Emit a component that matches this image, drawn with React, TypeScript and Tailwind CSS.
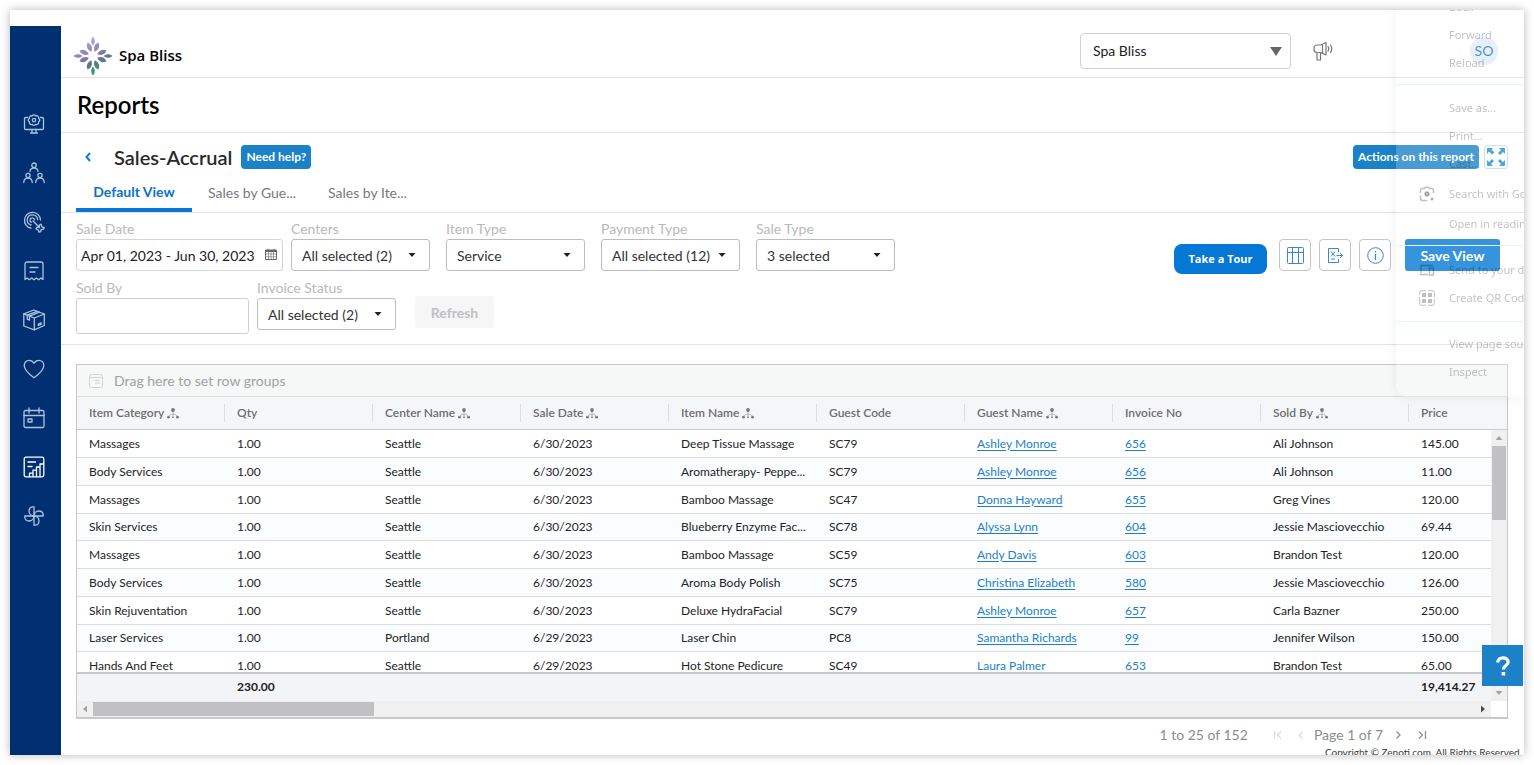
import React from 'react';

type IconProps = { children: React.ReactNode; className?: string };

function NavIcon({ children, className = 'size-[22px]' }: IconProps) {
  return (
    <svg viewBox="0 0 22 22" className={className} fill="none" stroke="currentColor" strokeWidth="1.3" strokeLinecap="round" strokeLinejoin="round" aria-hidden="true">
      {children}
    </svg>
  );
}

const navItems: { label: string; active?: boolean; icon: React.ReactNode }[] = [
  {
    label: 'Configuration',
    icon: (
      <>
        <path d="M4.500 4.500H2.800A1.300 1.300 0 0 0 1.500 5.800v9.400a1.300 1.300 0 0 0 1.300 1.300h16.400a1.300 1.300 0 0 0 1.300-1.300V5.800a1.300 1.300 0 0 0-1.300-1.300H17.500" />
        <path d="M9 16.500v3M13 16.500v3M7.500 20h7" />
        <path d="M9.200 3a2 2 0 0 1 3.600 0 2 2 0 0 1 2.800 2.300 2 2 0 0 1 0 3.600 2 2 0 0 1-2.800 2.400 2 2 0 0 1-3.600 0 2 2 0 0 1-2.800-2.400 2 2 0 0 1 0-3.600A2 2 0 0 1 9.200 3z" />
        <circle cx="11" cy="7.100" r="1.700" />
      </>
    ),
  },
  {
    label: 'Employees',
    icon: (
      <>
        <circle cx="11" cy="3.200" r="2.200" />
        <path d="M7 9.500c0-2 1.600-3.300 4-3.300s4 1.300 4 3.300" />
        <circle cx="5" cy="13.500" r="2.100" />
        <path d="M.8 20.500c0-2.500 1.600-4.300 4.200-4.300s4.200 1.800 4.200 4.300" />
        <circle cx="17" cy="13.500" r="2.100" />
        <path d="M12.800 20.500c0-2.500 1.600-4.300 4.200-4.300s4.200 1.800 4.200 4.300" />
      </>
    ),
  },
  {
    label: 'Marketing',
    icon: (
      <>
        <path d="M8 17.200A8 8 0 1 1 17.500 9" />
        <path d="M8 14A5.200 5.200 0 1 1 14.600 8.500" />
        <path d="M8.300 11.200A2.300 2.300 0 1 1 11.600 8.800" />
        <path d="M10 10l6.500 6.500M16.300 16.300v-2.300l1.800-.8.800 2.600 2.400.8-1 1.800h-2.200l-.3 2.200-1.800.6-.8-2.400-2.200-.8.8-1.700z" />
      </>
    ),
  },
  {
    label: 'Receipts',
    icon: (
      <>
        <path d="M2 19.500V4a2 2 0 0 1 2-2h14a2 2 0 0 1 2 2v15.500l-2-1.500-2.300 1.800L13.300 18 11 19.800 8.700 18l-2.400 1.800L4 18z" />
        <path d="M7 7.500h8M7 12h5" />
      </>
    ),
  },
  {
    label: 'Inventory',
    icon: (
      <>
        <path d="M.8 4.800L10.800 1l10.500 4v11.500L11.300 20.800.8 17z" />
        <path d="M.8 4.800l10.500 4.200V20.800M11.300 9l10-4" />
        <path d="M4.200 6.200v4l2.300 1V7.100M4.200 6.200L14 2.300M6.500 7.100L16.500 3.200" />
        <path d="M15.300 15v1.500l2.900-1.200v-1.500z" />
      </>
    ),
  },
  {
    label: 'Loyalty',
    icon: <path d="M11 19.800C5 15.500 1.200 12.200 1.200 7.600 1.200 4.500 3.400 2.300 6.200 2.300c2 0 3.800 1.100 4.800 3 1-1.900 2.800-3 4.800-3 2.800 0 5 2.200 5 5.300 0 4.600-3.800 7.900-9.800 12.200z" />,
  },
  {
    label: 'Appointments',
    icon: (
      <>
        <rect x="1" y="3.500" width="20" height="17" rx="1.500" />
        <path d="M1 8.500h20M6 1v5M16 1v5" />
        <rect x="5" y="12" width="4" height="3" />
      </>
    ),
  },
  {
    label: 'Reports',
    active: true,
    icon: (
      <>
        <rect x="1.200" y="1.200" width="19.600" height="19.600" rx="1.800" />
        <path d="M5 6h7.500M5 10.500h4" />
        <path d="M6.500 20.500v-3.300h3.500v3.300M10 17.200v-3h3.500v6.300M13.500 14.200V11h3.500v9.500M17 11V8h3.500" />
      </>
    ),
  },
  {
    label: 'Add-ons',
    icon: (
      <>
        <path d="M11 11V1.800H9.500A4.300 4.300 0 0 0 6 6c0 2.800 2 5 5 5z" />
        <path d="M11 11h9.200V9.500A4.300 4.300 0 0 0 16 6c-2.800 0-5 2-5 5z" />
        <path d="M11 11v9.200h1.500A4.300 4.300 0 0 0 16 16c0-2.800-2-5-5-5z" />
        <path d="M11 11H1.800v1.500A4.300 4.300 0 0 0 6 16c2.800 0 5-2 5-5z" />
      </>
    ),
  },
];

function Logo() {
  const outer = [0, 90, 180, 270];
  const inner = [22, 68, 112, 158, 202, 248, 292, 338];
  return (
    <svg viewBox="0 0 40 40" className="size-10" aria-hidden="true">
      <defs>
        <linearGradient id="petals" gradientUnits="userSpaceOnUse" x1="12" y1="2" x2="26" y2="38">
          <stop offset="0" stopColor="#b9b4dc" />
          <stop offset="0.500" stopColor="#7f7aa6" />
          <stop offset="0.680" stopColor="#5f7688" />
          <stop offset="0.850" stopColor="#3f9276" />
          <stop offset="1" stopColor="#3a9a78" />
        </linearGradient>
        <mask id="flower" maskUnits="userSpaceOnUse" x="0" y="0" width="40" height="40">
          <g fill="#fff">
            {outer.map((a) => (
              <path key={a} transform={`rotate(${a} 20 20)`} d="M20 0.500C22.300 3.500 22.500 6.200 20 9.500C17.500 6.200 17.700 3.500 20 0.500Z" />
            ))}
            {inner.map((a) => (
              <path key={a} transform={`rotate(${a} 20 20)`} d="M20 5.500C23.200 8.500 23 12 20 15.500C17 12 16.800 8.500 20 5.500Z" />
            ))}
          </g>
        </mask>
      </defs>
      <rect width="40" height="40" fill="url(#petals)" mask="url(#flower)" />
    </svg>
  );
}

function Filter({ id, label, value }: { id: string; label: string; value: string }) {
  return (
    <div className="flex w-[139px] flex-col">
      <label htmlFor={id} className="text-[14px] leading-5 text-[#b9b9bd]">{label}</label>
      <div className="relative">
        <select id={id} className="h-8 w-full appearance-none rounded-[3px] border border-[#bdbdbf] bg-white pl-[10px] text-[14px] text-[#333]">
          <option>{value}</option>
        </select>
        <svg viewBox="0 0 8 4" className="pointer-events-none absolute top-[14px] right-[14px] h-1 w-2" fill="#222" aria-hidden="true">
          <path d="M0.500 0h7L4 4z" />
        </svg>
      </div>
    </div>
  );
}

function GroupIcon() {
  return (
    <svg viewBox="0 0 12 11" className="ml-[3px] h-[11px] w-3" aria-hidden="true">
      <path d="M6 3v5M2 8l2-1.800h4L10 8" fill="none" stroke="#b0b2b4" strokeWidth="0.900" />
      <g fill="#77797b">
        <circle cx="6" cy="2" r="1.900" />
        <circle cx="1.500" cy="9.200" r="1.400" />
        <circle cx="6" cy="9.200" r="0.900" />
        <circle cx="10.500" cy="9.200" r="1.400" />
      </g>
    </svg>
  );
}

const columns = [
  { name: 'Item Category', group: true },
  { name: 'Qty' },
  { name: 'Center Name', group: true },
  { name: 'Sale Date', group: true },
  { name: 'Item Name', group: true },
  { name: 'Guest Code' },
  { name: 'Guest Name', group: true },
  { name: 'Invoice No' },
  { name: 'Sold By', group: true },
  { name: 'Price' },
];

const rows = [
  ['Massages', '1.00', 'Seattle', '6/30/2023', 'Deep Tissue Massage', 'SC79', 'Ashley Monroe', '656', 'Ali Johnson', '145.00'],
  ['Body Services', '1.00', 'Seattle', '6/30/2023', 'Aromatherapy- Peppe...', 'SC79', 'Ashley Monroe', '656', 'Ali Johnson', '11.00'],
  ['Massages', '1.00', 'Seattle', '6/30/2023', 'Bamboo Massage', 'SC47', 'Donna Hayward', '655', 'Greg Vines', '120.00'],
  ['Skin Services', '1.00', 'Seattle', '6/30/2023', 'Blueberry Enzyme Fac...', 'SC78', 'Alyssa Lynn', '604', 'Jessie Masciovecchio', '69.44'],
  ['Massages', '1.00', 'Seattle', '6/30/2023', 'Bamboo Massage', 'SC59', 'Andy Davis', '603', 'Brandon Test', '120.00'],
  ['Body Services', '1.00', 'Seattle', '6/30/2023', 'Aroma Body Polish', 'SC75', 'Christina Elizabeth', '580', 'Jessie Masciovecchio', '126.00'],
  ['Skin Rejuventation', '1.00', 'Seattle', '6/30/2023', 'Deluxe HydraFacial', 'SC79', 'Ashley Monroe', '657', 'Carla Bazner', '250.00'],
  ['Laser Services', '1.00', 'Portland', '6/29/2023', 'Laser Chin', 'PC8', 'Samantha Richards', '99', 'Jennifer Wilson', '150.00'],
  ['Hands And Feet', '1.00', 'Seattle', '6/29/2023', 'Hot Stone Pedicure', 'SC49', 'Laura Palmer', '653', 'Brandon Test', '65.00'],
];

const totals = ['', '230.00', '', '', '', '', '', '', '', '19,414.27'];

function ReportTable() {
  return (
    <table className="w-full table-fixed border-separate border-spacing-0 text-left text-[12px] leading-4 text-[#222426]">
      <colgroup>
        {columns.map((c, i) => (
          <col key={c.name} className={i < 9 ? 'w-[148px]' : ''} />
        ))}
      </colgroup>
      <thead className="sticky top-0 z-10">
        <tr className="h-[33px]">
          {columns.map((c, i) => (
            <th key={c.name} className="border-b border-[#c9cbcd] bg-[#f5f6f7] p-0 font-semibold text-[#6c6e70]">
              <div className={`flex h-[18px] items-center pl-3 ${i < 9 ? 'border-r border-[#dcdee0]' : ''}`}>
                {c.name}
                {c.group && <GroupIcon />}
              </div>
            </th>
          ))}
        </tr>
      </thead>
      <tbody>
        {rows.map((row, r) => (
          <tr key={r} className={`${r % 4 === 3 ? 'h-[27px]' : 'h-7'} ${r % 2 ? 'bg-[#fafcfe]' : 'bg-white'}`}>
            {row.map((cell, c) => (
              <td key={c} className="truncate border-b border-[#dadcde] py-0 pr-0 pl-3">
                {c === 6 || c === 7 ? (
                  <a href="#detail" className="text-[#1b7fcb] underline underline-offset-2">{cell}</a>
                ) : (
                  cell
                )}
              </td>
            ))}
          </tr>
        ))}
      </tbody>
      <tfoot className="sticky bottom-0">
        <tr className="h-[29px]">
          {totals.map((t, i) => (
            <td key={i} className="border-t-2 border-[#c6c8ca] bg-[#f3f4f6] pt-0 pr-0 pb-[2px] pl-3 font-bold text-[#1e2022]">{t}</td>
          ))}
        </tr>
      </tfoot>
    </table>
  );
}

function Arrow({ d, className }: { d: string; className: string }) {
  return (
    <svg viewBox="0 0 8 8" className={`size-2 ${className}`} fill="currentColor" aria-hidden="true">
      <path d={d} />
    </svg>
  );
}

function MenuItem({ children, icon }: { children: string; icon?: React.ReactNode }) {
  return (
    <div className="flex h-7 items-center whitespace-nowrap">
      <span className="flex w-[53px] shrink-0 items-center pl-[23px]">{icon}</span>
      {children}
    </div>
  );
}

function BrowserMenu() {
  return (
    <div className="pointer-events-none absolute top-0 right-0 z-20 flex h-[387px] w-32 flex-col overflow-hidden rounded-bl-xl bg-white/20 font-['Noto_Sans','Open_Sans',sans-serif] text-[11px] text-black/25 shadow-[0_0_12px_rgba(0,0,0,0.07)]">
      <div className="-mt-[17px] border-b border-[#e2f6f4] pb-[7px]">
        <MenuItem>Back</MenuItem>
        <MenuItem>Forward</MenuItem>
        <MenuItem>Reload</MenuItem>
      </div>
      <div className="pt-[9px]">
        <MenuItem>Save as...</MenuItem>
        <MenuItem>Print...</MenuItem>
        <MenuItem>Cast...</MenuItem>
      </div>
      <div className="flex flex-col gap-[2px] border-b border-[#e2f6f4] pt-[2px] pb-[7px]">
        <MenuItem
          icon={
            <svg viewBox="0 0 16 16" className="size-4" fill="none" stroke="currentColor" strokeWidth="1.500">
              <path d="M1.500 7V4.500a2 2 0 0 1 2-2h2l1-1.200h3l1 1.200h2a2 2 0 0 1 2 2V7M1.500 9.500v3a2 2 0 0 0 2 2H8" />
              <circle cx="8" cy="8" r="2" fill="currentColor" />
              <circle cx="13" cy="13" r="0.800" fill="currentColor" />
            </svg>
          }
        >
          Search with Google Lens
        </MenuItem>
        <MenuItem>Open in reading mode</MenuItem>
      </div>
      <div className="border-b border-[#e2f6f4] pt-[10px] pb-[9px]">
        <MenuItem
          icon={
            <svg viewBox="0 0 16 16" className="size-4" fill="none" stroke="currentColor" strokeWidth="1.500">
              <path d="M2 11V3.500h12M0.500 12.500H9" />
              <rect x="10.500" y="6" width="4" height="7" />
            </svg>
          }
        >
          Send to your devices
        </MenuItem>
        <MenuItem
          icon={
            <svg viewBox="0 0 16 16" className="size-4" fill="currentColor">
              <path d="M3 3h4v4H3zM9 3h4v4H9zM3 9h4v4H3zM9 9h4v4H9z" />
              <path d="M.7 5V2.500A1.800 1.800 0 0 1 2.500.700H7M9 .700h4.500a1.800 1.800 0 0 1 1.800 1.800V7M15.300 9v4.500a1.800 1.800 0 0 1-1.800 1.800H9M7 15.300H2.500A1.800 1.800 0 0 1 .7 13.500V7" fill="none" stroke="currentColor" />
            </svg>
          }
        >
          Create QR Code
        </MenuItem>
      </div>
      <div className="pt-2">
        <MenuItem>View page source</MenuItem>
        <MenuItem>Inspect</MenuItem>
      </div>
    </div>
  );
}

function ToolButton({ label, children }: { label: string; children: React.ReactNode }) {
  return (
    <button aria-label={label} className="flex size-8 items-center justify-center rounded-[4px] border border-[#c4c4c6] bg-white text-[#3a86cc]">
      {children}
    </button>
  );
}

export default function App() {
  return (
    <div className="h-screen bg-white p-[10px] font-['Lato',sans-serif]">
      <div className="relative flex h-full overflow-hidden bg-white shadow-[0_0_9px_rgba(0,0,0,0.28)]">
        <nav aria-label="Main" className="mt-4 flex w-[51px] shrink-0 flex-col items-center gap-[27px] bg-[#002f72] pt-[87px] pr-1">
          {navItems.map((item) => (
            <a key={item.label} href="#nav" aria-label={item.label} className={item.active ? 'text-white' : 'text-[#adc3dd]'}>
              <NavIcon>{item.icon}</NavIcon>
            </a>
          ))}
        </nav>

        <main className="flex min-w-0 flex-1 flex-col">
          <header className="flex h-[68px] shrink-0 items-center border-b border-[#e3e3e5] pt-[14px] pr-[26px] pl-3">
            <div className="flex items-center gap-[6px] pt-[10px]">
              <Logo />
              <span className="font-['Open_Sans',sans-serif] text-[15px] font-semibold text-black">Spa Bliss</span>
            </div>
            <div className="relative ml-auto w-[211px]">
              <select aria-label="Center" className="h-9 w-full appearance-none rounded-[4px] border border-[#d2d2d4] bg-white pl-3 text-[14px] text-[#222]">
                <option>Spa Bliss</option>
              </select>
              <svg viewBox="0 0 12 9" className="pointer-events-none absolute top-[14px] right-[9px] h-[9px] w-3" fill="#666" aria-hidden="true">
                <path d="M0 0h12L6 9z" />
              </svg>
            </div>
            <button aria-label="Announcements" className="mr-[137px] ml-[22px] text-[#777]">
              <svg viewBox="0 0 20 20" className="size-5" fill="none" stroke="currentColor" strokeWidth="1.200" strokeLinejoin="round" strokeLinecap="round">
                <path d="M6.500 4H4a3 3 0 0 0-3 3v1.500a3 3 0 0 0 3 3h3.500L13 14V1.500L7.500 4z" />
                <path d="M4 11.500V19h3.500v-7.500M9.500 4v8M15 5.500c.9 1.400.9 3.200 0 4.600M17.500 4c1.600 2.300 1.600 5.300 0 7.600" />
              </svg>
            </button>
            <span className="flex size-7 items-center justify-center rounded-full bg-[#dfedfb] text-[14px] text-[#1c78d0]">SO</span>
          </header>

          <div className="flex h-[55px] shrink-0 items-center border-b border-[#e3e3e5] pl-4">
            <h1 className="text-[24px] font-semibold text-black">Reports</h1>
          </div>

          <section className="flex h-20 shrink-0 flex-col border-b border-[#e3e3e5] pt-3 pr-4 pl-[15px]">
            <div className="flex h-6 items-center">
              <button aria-label="Back" className="ml-[9px] text-[#0d7ce8]">
                <svg viewBox="0 0 6 10" className="h-[10px] w-[6px]" fill="none" stroke="currentColor" strokeWidth="2">
                  <path d="M5 1L1.500 5 5 9" />
                </svg>
              </button>
              <h2 className="ml-[23px] text-[20px] font-semibold text-[#2a2a2a]">Sales-Accrual</h2>
              <button className="ml-[9px] h-6 rounded-[4px] bg-[#1b82c8] px-[5px] text-[12px] font-bold text-white">Need help?</button>
              <button className="ml-auto h-6 rounded-[4px] bg-[#1b82c8] px-[5px] text-[12px] font-bold text-white">Actions on this report</button>
              <button aria-label="Full screen" className="ml-[5px] flex size-6 items-center justify-center rounded-[3px] border border-[#b5dcf0] bg-white text-[#2392cc]">
                <svg viewBox="0 0 18 18" className="size-[18px] shrink-0" fill="currentColor" aria-hidden="true">
                  <path d="M0 0h6L4.500 1.500l3 3L5 6.500l-3-3L0 6zM18 0v6l-2-2-3 3-2-2 3-3-2-2zM0 18v-6l2 2 3-3 2 2-3 3 2 2zM18 18h-6l2-2-3-3 2-2 3 3 2-2z" />
                </svg>
              </button>
            </div>
            <div className="flex flex-1 text-[14px]">
              <button className="w-[116px] border-b-4 border-[#0a78d2] pt-[5px] font-bold text-[#0a72c8]">Default View</button>
              <button className="w-[120px] pt-1 pl-4 text-left text-[#77797b]">Sales by Gue...</button>
              <button className="w-[120px] pt-1 pl-4 text-left text-[#77797b]">Sales by Ite...</button>
            </div>
          </section>

          <section className="flex shrink-0 items-start border-b border-[#e3e3e5] pt-[6px] pr-6 pb-[10px] pl-[15px]">
            <div className="flex flex-col gap-[7px]">
              <div className="flex gap-4">
                <div className="flex gap-2">
                  <div className="flex w-[207px] flex-col">
                    <label htmlFor="date" className="text-[14px] leading-5 text-[#b9b9bd]">Sale Date</label>
                    <div className="relative">
                      <input id="date" defaultValue="Apr 01, 2023 - Jun 30, 2023" className="h-8 w-full rounded-[3px] border border-[#d3d3e2] pl-1 text-[14px] text-[#222]" />
                      <svg viewBox="0 0 12 12" className="pointer-events-none absolute top-[9px] right-[6px] size-3" fill="none" stroke="#666" aria-hidden="true">
                        <path d="M.5 2h11v9.500H.5z" />
                        <path d="M.5 3h11" strokeWidth="2" />
                        <path d="M3 .500v2M9 .500v2M.5 6h11M.5 8.800h11M3.500 4v7.500M6 4v7.500M8.500 4v7.500" strokeWidth="0.600" />
                      </svg>
                    </div>
                  </div>
                  <Filter id="centers" label="Centers" value="All selected (2)" />
                </div>
                <Filter id="item-type" label="Item Type" value="Service" />
                <Filter id="payment-type" label="Payment Type" value="All selected (12)" />
                <Filter id="sale-type" label="Sale Type" value="3 selected" />
              </div>
              <div className="flex gap-2">
                <div className="flex w-[173px] flex-col">
                  <label htmlFor="sold-by" className="text-[14px] leading-5 text-[#b9b9bd]">Sold By</label>
                  <input id="sold-by" className="h-9 w-full rounded-[3px] border border-[#cfcfd1] px-2 text-[14px]" />
                </div>
                <Filter id="invoice-status" label="Invoice Status" value="All selected (2)" />
                <button disabled className="mt-[18px] ml-[11px] h-8 w-[79px] rounded-[3px] bg-[#f6f6f6] text-[14px] font-bold text-[#c0c0c2]">Refresh</button>
              </div>
            </div>
            <div className="mt-[17px] ml-auto flex items-center">
              <button className="mt-2 h-[30px] w-[93px] rounded-lg bg-[#0478d4] font-['Open_Sans',sans-serif] text-[11px] font-bold text-white">Take a Tour</button>
              <div className="ml-3 flex gap-2">
                <ToolButton label="Columns">
                  <svg viewBox="0 0 17 17" className="size-[17px]" fill="none" stroke="currentColor">
                    <rect x=".5" y=".5" width="16" height="16" rx="1" />
                    <path d="M5.500.500v16M11.500.500v16M.5 5.500h16" />
                  </svg>
                </ToolButton>
                <ToolButton label="Export">
                  <svg viewBox="0 0 17 17" className="size-[17px]" fill="none" stroke="currentColor">
                    <path d="M11.500 5V1.500h-10v14h10V12M4 4.500l4 5M8 4.500l-4 5M4 12h4M9.500 8.500h6M13 6l2.500 2.500L13 11" />
                  </svg>
                </ToolButton>
                <ToolButton label="Information">
                  <svg viewBox="0 0 17 17" className="size-[17px]" fill="none" stroke="currentColor">
                    <circle cx="8.500" cy="8.500" r="7.800" />
                    <path d="M8.500 7v6M8.500 4v1.500" strokeWidth="1.200" />
                  </svg>
                </ToolButton>
              </div>
              <button className="ml-[14px] h-8 w-[95px] rounded-[3px] bg-[#0478d4] text-[14px] font-bold text-white">Save View</button>
            </div>
          </section>

          <section className="mt-[19px] mr-4 ml-[15px] shrink-0 border border-b-2 border-[#c6c8ca]">
            <div className="flex h-8 items-center border-b border-[#dcdee0] bg-[#f6f7f7] pl-3 text-[14px] text-[#a0a2a4]">
              <svg viewBox="0 0 14 14" className="mr-[11px] size-[14px]" fill="none" stroke="#d0d2d4" aria-hidden="true">
                <rect x=".5" y=".5" width="13" height="13" rx="2" />
                <path d="M1 3.500h12M3.500 6.500h1M6 6.500h5M6 9h5" />
              </svg>
              Drag here to set row groups
            </div>
            <div className="flex h-[304px]">
              <div className="min-w-0 flex-1 overflow-hidden">
                <ReportTable />
              </div>
              <div className="flex w-4 flex-col">
                <div className="h-[33px] border-b border-[#c9cbcd] bg-[#f5f6f7]" />
                <div className="flex flex-1 flex-col items-center bg-[#f0f0f1] py-1 text-[#a2a4a6]">
                  <Arrow d="M0.500 6h7L4 2z" className="mb-1" />
                  <div className="h-[74px] w-[14px] bg-[#c1c1c3]" />
                  <Arrow d="M0.500 2h7L4 6z" className="mt-auto" />
                </div>
              </div>
            </div>
            <div className="mr-4 flex h-4 items-center bg-[#f0f0f1] px-1">
              <Arrow d="M6 .5v7L2 4z" className="mr-1 text-[#a2a4a6]" />
              <div className="h-[14px] w-[281px] bg-[#c1c1c3]" />
              <Arrow d="M2 .5v7L6 4z" className="ml-auto text-[#4a4c4e]" />
            </div>
          </section>

          <footer className="shrink-0">
            <div className="flex h-[27px] items-center justify-end pt-1 pr-[97px] text-[14px] text-[#8b8d8f]">
              <span>1 to 25 of 152</span>
              <button aria-label="First page" disabled className="ml-[25px] text-[#d8dadc]">
                <svg viewBox="0 0 10 10" className="size-[10px]" fill="none" stroke="currentColor" strokeWidth="1.300"><path d="M1.500 1v8M8 1.500L4.500 5 8 8.500" /></svg>
              </button>
              <button aria-label="Previous page" disabled className="ml-[13px] text-[#d8dadc]">
                <svg viewBox="0 0 10 10" className="size-[10px]" fill="none" stroke="currentColor" strokeWidth="1.300"><path d="M6.500 1.500L3 5l3.500 3.500" /></svg>
              </button>
              <span className="ml-2">Page 1 of 7</span>
              <button aria-label="Next page" className="ml-[10px] text-[#8b8d8f]">
                <svg viewBox="0 0 10 10" className="size-[10px]" fill="none" stroke="currentColor" strokeWidth="1.300"><path d="M3.500 1.500L7 5 3.500 8.500" /></svg>
              </button>
              <button aria-label="Last page" className="ml-[14px] text-[#8b8d8f]">
                <svg viewBox="0 0 10 10" className="size-[10px]" fill="none" stroke="currentColor" strokeWidth="1.300"><path d="M8.500 1v8M2 1.500L5.500 5 2 8.500" /></svg>
              </button>
            </div>
            <p className="pr-[2px] text-right text-[10px] leading-3 text-[#3a3a3a]">Copyright © Zenoti.com. All Rights Reserved.</p>
          </footer>
        </main>

        <BrowserMenu />
        <button aria-label="Help" className="absolute right-px bottom-[69px] flex h-[41px] w-[41px] items-center justify-center bg-[#1b82c8] text-white">
          <svg viewBox="0 0 14 20" className="h-5 w-[14px]" fill="none" stroke="currentColor" strokeWidth="3.200">
            <path d="M1.800 6.500C1.800 3.500 4 1.800 7 1.800s5.200 1.600 5.200 4.200c0 3.600-4.800 3.500-4.800 7.500" />
            <path d="M7.400 16v3.500" strokeWidth="3.600" />
          </svg>
        </button>
      </div>
    </div>
  );
}
